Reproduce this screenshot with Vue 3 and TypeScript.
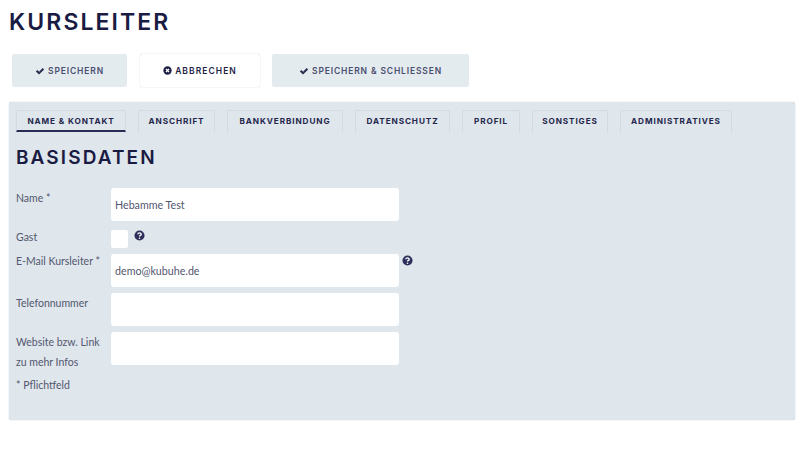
<script setup lang="ts">
// Kursleiter edit form: action buttons, tab row and the "Basisdaten" fields.

const tabs = [
  { label: "Name & Kontakt", width: 110 },
  { label: "Anschrift", width: 77 },
  { label: "Bankverbindung", width: 116 },
  { label: "Datenschutz", width: 95 },
  { label: "Profil", width: 58 },
  { label: "Sonstiges", width: 76 },
  { label: "Administratives", width: 112 },
];

const checkPath = "M0.8 5.6 L2.7 3.7 L4.8 5.8 L9.3 1.3 L11.2 3.2 L4.8 9.4 Z";
</script>

<template>
  <div class="page">
    <h1>KURSLEITER</h1>

    <div class="actions">
      <button class="btn save">
        <svg class="ico" viewBox="0 0 12 10"><path :d="checkPath" /></svg>
        Speichern
      </button>
      <button class="btn cancel">
        <svg class="ico round" viewBox="0 0 10 10">
          <circle cx="5" cy="5" r="4.6" />
          <path d="M3.3 3.3 L6.7 6.7 M6.7 3.3 L3.3 6.7" class="cross" />
        </svg>
        Abbrechen
      </button>
      <button class="btn save-close">
        <svg class="ico" viewBox="0 0 12 10"><path :d="checkPath" /></svg>
        Speichern &amp; Schliessen
      </button>
    </div>

    <section class="panel">
      <nav class="tabs">
        <a
          v-for="(tab, i) in tabs"
          :key="tab.label"
          :class="['tab', { active: i === 0 }]"
          :style="{ width: tab.width + 'px' }"
        >{{ tab.label }}</a>
      </nav>

      <h2>BASISDATEN</h2>

      <div class="form">
        <label class="lbl">Name *</label>
        <div class="field"><input class="inp" value="Hebamme Test" /></div>

        <label class="lbl">Gast</label>
        <div class="field check-row">
          <span class="box"></span>
          <svg class="help" viewBox="0 0 12 12">
            <circle cx="6" cy="6" r="5.5" />
            <path class="q" d="M4.2 4.7 C4.2 2.7 7.9 2.6 7.9 4.6 C7.9 5.9 6 5.8 6 7.2" />
            <circle class="dot" cx="6" cy="9" r="0.9" />
          </svg>
        </div>

        <label class="lbl mail">E-Mail Kursleiter *</label>
        <div class="field">
          <input class="inp" value="demo@kubuhe.de" />
          <svg class="help mail-help" viewBox="0 0 12 12">
            <circle cx="6" cy="6" r="5.5" />
            <path class="q" d="M4.2 4.7 C4.2 2.7 7.9 2.6 7.9 4.6 C7.9 5.9 6 5.8 6 7.2" />
            <circle class="dot" cx="6" cy="9" r="0.9" />
          </svg>
        </div>

        <label class="lbl">Telefonnummer</label>
        <div class="field"><input class="inp" /></div>

        <label class="lbl">Website bzw. Link zu mehr Infos</label>
        <div class="field"><input class="inp" /></div>
      </div>

      <p class="note">* Pflichtfeld</p>
    </section>
  </div>
</template>

<style>
body {
  background: #fff;
  overflow: hidden;
}
</style>

<style scoped>
.page {
  width: 800px;
  height: 450px;
  padding: 10px 5px 0 9px;
  box-sizing: border-box;
  font-family: Lato, "Open Sans", sans-serif;
  color: #1b1c44;
}
h1 {
  margin: 0;
  font: 600 23px/24px Inter, sans-serif;
  letter-spacing: 2.1px;
  color: #1a1b42;
}
.actions {
  display: flex;
  gap: 13px;
  margin: 20px 0 15px 3px;
}
.btn {
  height: 33px;
  border: 0;
  border-radius: 2px;
  padding: 0;
  display: flex;
  align-items: center;
  justify-content: center;
  gap: 3px;
  font: 600 8.5px Inter, sans-serif;
  letter-spacing: 0.85px;
  text-transform: uppercase;
  color: #4a4f70;
  background: #e4ebef;
}
.save { width: 115px; }
.cancel {
  width: 120px;
  background: #fff;
  color: #1e1f47;
  letter-spacing: 1.05px;
  box-shadow: 0 0 1px rgba(60, 80, 110, 0.45);
}
.save-close { width: 197px; margin-left: -1px; }
.ico {
  width: 10px;
  height: 8px;
  fill: #2a2c50;
}
.ico.round { width: 9px; height: 9px; fill: #1e1f47; }
.cross {
  stroke: #fff;
  stroke-width: 1.4;
  fill: none;
}
.panel {
  height: 318px;
  box-sizing: border-box;
  background: #dfe6ec;
  border-radius: 3px;
  box-shadow: 0 0 1px rgba(60, 80, 110, 0.5);
  padding: 8px 7px 0;
}
.tabs {
  display: flex;
  gap: 12px;
}
.tab {
  box-sizing: border-box;
  height: 22px;
  padding-bottom: 2px;
  display: flex;
  align-items: center;
  justify-content: center;
  font: 700 8.2px Inter, sans-serif;
  letter-spacing: 0.9px;
  text-transform: uppercase;
  white-space: nowrap;
  color: #25274c;
  border: 1px solid #d3dbe2;
  border-bottom: 0;
  border-radius: 2px 2px 0 0;
}
.tab.active {
  border-bottom: 2px solid #2a2c55;
  padding: 1px 0 0;
}
h2 {
  margin: 15px 0 19px;
  font: 600 19px/22px Inter, sans-serif;
  letter-spacing: 2.1px;
  color: #1a1b42;
}
.form {
  display: grid;
  grid-template-columns: 95px 288px;
  row-gap: 6px;
}
.lbl {
  font-size: 10.5px;
  line-height: 20px;
  color: #53576f;
}
.lbl.mail { margin-top: -3px; }
.field { position: relative; }
.inp {
  display: block;
  width: 100%;
  height: 33px;
  box-sizing: border-box;
  border: 0;
  border-radius: 3px;
  background: #fff;
  padding: 0 4px;
  font: 10.7px Lato, sans-serif;
  color: #53576f;
  outline: none;
}
.check-row {
  display: flex;
  align-items: flex-start;
  gap: 6px;
  height: 18px;
  margin-top: 3px;
}
.box {
  width: 17px;
  height: 18px;
  background: #fff;
  border-radius: 2px;
}
.help {
  width: 11px;
  height: 11px;
  fill: #2d2f5a;
}
.q {
  fill: none;
  stroke: #fff;
  stroke-width: 1.5;
}
.dot { fill: #fff; }
/* sits beside the field, outside the grid column */
.mail-help {
  position: absolute;
  left: 291px;
  top: 1px;
}
.note {
  margin: 3px 0 0;
  font-size: 10.5px;
  line-height: 20px;
  color: #53576f;
}
</style>
